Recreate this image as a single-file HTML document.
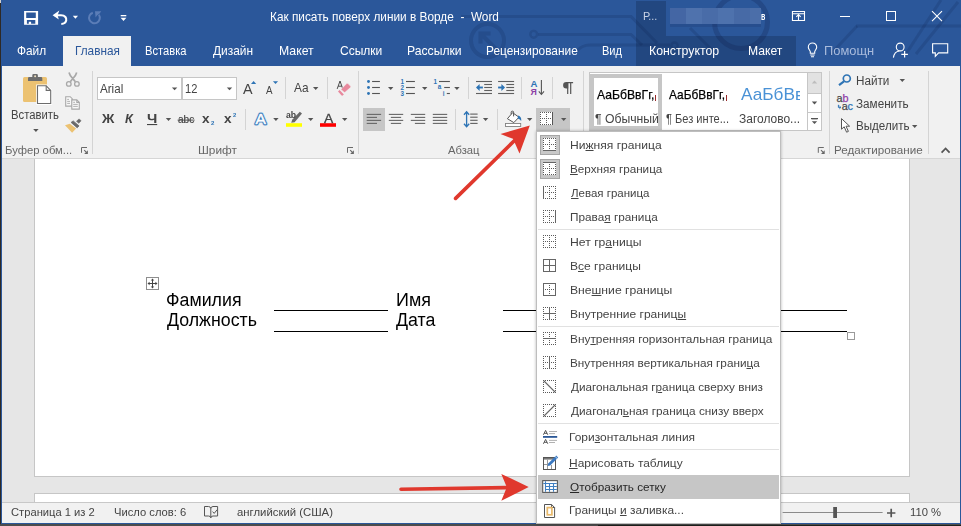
<!DOCTYPE html>
<html><head><meta charset="utf-8">
<style>
html,body{margin:0;padding:0}
body{width:961px;height:526px;overflow:hidden;background:#2e2925;position:relative;font-family:"Liberation Sans",sans-serif}
.a{position:absolute}
.t{position:absolute;line-height:20px;white-space:pre;transform-origin:0 0;display:block}
.t u{text-decoration:underline;text-underline-offset:1px;text-decoration-thickness:1px}
svg{position:absolute;overflow:visible}
.sep{position:absolute;width:1px;background:#d4d4d4}
.ar{position:absolute;width:0;height:0;border-left:2.6px solid transparent;border-right:2.6px solid transparent;border-top:2.8px solid #555}
</style></head><body>
<!-- window -->
<div class="a" style="left:0;top:524px;width:961px;height:2px;background:#4c4c4c"></div>
<div class="a" style="left:598px;top:525px;width:363px;height:1px;background:#1e211c"></div>
<div class="a" style="left:0;top:0;width:1px;height:3px;background:#d0d0d0"></div>
<div class="a" style="left:1px;top:0;width:960px;height:524.4px;background:#2b579a"></div>
<!-- contextual dark -->
<div class="a" style="left:636px;top:1px;width:30px;height:35px;background:#224780"></div>
<div class="a" style="left:636px;top:36px;width:160px;height:30px;background:#224780"></div>
<!-- bg pattern -->
<svg style="left:0;top:0" width="961" height="66" viewBox="0 0 961 66" fill="none" stroke="#264d8b" stroke-width="3">
<g stroke="rgba(8,22,58,0.15)" fill="none" stroke-width="3">
<path d="M461 16.5H631L657 43"/>
<circle cx="487.5" cy="40.6" r="16.5" stroke-width="4"/>
<path d="M497 50L481 34M480.5 43.5V33.5H490.5" stroke-width="4"/>
<circle cx="533.7" cy="34.3" r="3.4" stroke-width="2.4"/>
<path d="M538 34.4H631L642 45"/>
<path d="M577 51Q582 45 590 45H670"/>
<circle cx="674.5" cy="45.7" r="3.2" stroke-width="2.4"/>
<path d="M856 26H961"/>
<path d="M857 26L830 55"/>
<path d="M941 0L906 54"/>
<path d="M958 2L916 54"/>
<circle cx="741" cy="22" r="26.5" stroke-width="5" stroke="rgba(8,22,58,0.2)"/>
<path d="M690 28L712 50"/>
</g>

</svg>
<!-- blur -->
<div class="a" style="left:670px;top:8px;width:91px;height:16px;background:linear-gradient(90deg,#4466a4 0 16px,#4f72ad 16px 32px,#496ca8 32px 48px,#4e72ad 48px 64px,#476aa6 64px 80px,#4b6ea9 80px 91px);filter:blur(.5px)"></div>
<div class="a" style="left:670px;top:24px;width:91px;height:3px;background:rgba(20,40,90,.18);filter:blur(.6px)"></div>
<!-- active tab -->
<div class="a" style="left:63px;top:36px;width:68px;height:30px;background:#f1f1f1"></div>
<!-- ribbon -->
<div class="a" style="left:2px;top:66px;width:958px;height:92px;background:#f1f1f1"></div>
<div class="a" style="left:2px;top:158px;width:958px;height:1px;background:#d6d6d6"></div>
<!-- doc area -->
<div class="a" style="left:2px;top:159px;width:958px;height:343px;background:#e6e6e6"></div>
<div class="a" style="left:34px;top:159px;width:876px;height:318px;background:#fff;box-sizing:border-box;border:1px solid #c6c6c6;border-top:none"></div>
<div class="a" style="left:34px;top:493px;width:876px;height:9px;background:#fff;box-sizing:border-box;border:1px solid #c6c6c6;border-bottom:none"></div>
<!-- status -->
<div class="a" style="left:2px;top:502px;width:958px;height:1px;background:#c8c8c8"></div>
<div class="a" style="left:2px;top:503px;width:958px;height:20.2px;background:#f1f1f1"></div>
<svg style="left:0;top:0" width="961" height="526" viewBox="0 0 961 526">
<!-- save -->
<path fill="#fff" fill-rule="evenodd" d="M24.1 11.1H38.1V24.7H24.1ZM26.2 12.5H35.8V18H26.2ZM26.9 20H35.3V23.8H31.1V21.7H28.8V23.8H26.9Z"/>
<!-- undo -->
<path d="M54.5 15.2H61C65.2 15.2 66.8 18.2 66.2 20.6C65.7 22.8 63.6 23.9 61.3 24" stroke="#fff" stroke-width="2.1" fill="none"/>
<path d="M59.3 10.6L52.6 15.2L58.8 19.4L57.6 15.2Z" fill="#fff"/>
<path d="M72.8 15.7H78L75.4 18.7Z" fill="#fff"/>
<!-- redo -->
<path d="M98.9 14.8A5.4 5.4 0 1 1 92.8 12.7" stroke="#5b7db7" stroke-width="2" fill="none"/>
<path d="M95 11.3H101.3L99.6 13.6L97 15.4L95.6 17.4Z" fill="#5b7db7"/>
<!-- qat -->
<rect x="120.7" y="15" width="5.6" height="1.3" fill="#fff"/>
<path d="M120.6 17.8H126.4L123.5 20.9Z" fill="#fff"/>
<!-- window buttons -->
<path d="M792.45 11.45H804.5V20.5H792.45ZM792.45 13.8H804.5" stroke="#fff" stroke-width="1.1" fill="none"/>
<path d="M798.5 20.5V14.6M796.3 16.8L798.5 14.6L800.7 16.8" stroke="#fff" stroke-width="1.1" fill="none"/>
<rect x="840" y="16" width="10" height="1" fill="#fff"/>
<rect x="886.5" y="11.5" width="9" height="9" stroke="#fff" stroke-width="1" fill="none"/>
<path d="M932 11.2L942 21.2M942 11.2L932 21.2" stroke="#fff" stroke-width="1.1" fill="none"/>
<!-- lightbulb -->
<path d="M810.3 53.2V51.8C810.3 50.4 808.3 49.3 808.3 47.2A4.2 4.2 0 0 1 816.7 47.2C816.7 49.3 814.7 50.4 814.7 51.8V53.2Z" stroke="#fff" stroke-width="1.1" fill="none"/>
<path d="M810.3 55H814.7M811 56.8H814" stroke="#fff" stroke-width="1.1"/>
<!-- person+ -->
<circle cx="900.2" cy="47" r="3.9" stroke="#fff" stroke-width="1.1" fill="none"/>
<path d="M893.4 57.6C894 53.4 896.6 51.3 899.4 51" stroke="#fff" stroke-width="1.1" fill="none"/>
<path d="M904.6 51V57.6M901.3 54.3H907.9" stroke="#fff" stroke-width="1.2"/>
<!-- comment -->
<path d="M932.6 43.7H947.7V52.9H938.6L935.3 56.3V52.9H932.6Z" stroke="#fff" stroke-width="1.1" fill="none"/>
</svg>

<!-- group separators -->
<div class="sep" style="left:92px;top:71px;height:83px"></div>
<div class="sep" style="left:358px;top:71px;height:83px"></div>
<div class="sep" style="left:583px;top:71px;height:83px"></div>
<div class="sep" style="left:829px;top:71px;height:83px"></div>
<div class="sep" style="left:928px;top:71px;height:83px"></div>
<!-- small separators row1 -->
<div class="sep" style="left:285px;top:77px;height:22px"></div>
<div class="sep" style="left:327px;top:77px;height:22px"></div>
<div class="sep" style="left:468px;top:77px;height:22px"></div>
<div class="sep" style="left:521px;top:77px;height:22px"></div>
<div class="sep" style="left:552px;top:77px;height:22px"></div>
<!-- small separators row2 -->
<div class="sep" style="left:245px;top:109px;height:21px"></div>
<div class="sep" style="left:455px;top:109px;height:21px"></div>
<div class="sep" style="left:497px;top:109px;height:21px"></div>
<!-- font boxes -->
<div class="a" style="left:97px;top:77px;width:85px;height:23px;box-sizing:border-box;background:#fff;border:1px solid #c6c6c6"></div>
<div class="a" style="left:182px;top:77px;width:55px;height:23px;box-sizing:border-box;background:#fff;border:1px solid #c6c6c6"></div>
<!-- selected buttons -->
<div class="a" style="left:363px;top:108px;width:22px;height:23px;background:#c6c6c6"></div>
<div class="a" style="left:536px;top:108px;width:34px;height:24px;background:#c6c6c6"></div>
<!-- styles gallery -->
<div class="a" style="left:589px;top:72px;width:233px;height:59px;box-sizing:border-box;background:#fff;border:1px solid #c6c6c6"></div>
<div class="a" style="left:590px;top:74px;width:72px;height:56px;box-sizing:border-box;border:4px solid #c6c6c6"></div>
<div class="a" style="left:807px;top:72px;width:15px;height:59px;box-sizing:border-box;border:1px solid #c6c6c6;background:#fff"></div>
<div class="a" style="left:808px;top:73px;width:13px;height:20px;background:#e2e2e2"></div>
<div class="a" style="left:807px;top:93px;width:15px;height:1px;background:#c6c6c6"></div>
<div class="a" style="left:807px;top:112px;width:15px;height:1px;background:#c6c6c6"></div>
<div class="a" style="left:811.4px;top:118.4px;width:6.2px;height:1px;background:#555"></div>

<div class="a" style="left:655px;top:95px;width:1px;height:6px;background:#9a2a2a"></div>
<div class="a" style="left:726px;top:95px;width:1px;height:6px;background:#9a2a2a"></div>

<svg style="left:0;top:0" width="961" height="526" viewBox="0 0 961 526">
<!-- paste -->
<rect x="23" y="77" width="24" height="25" rx="1.6" fill="#ecc272"/>
<path d="M28 81V78.2Q28 77 29.2 77H32.3V75.2Q32.3 74 33.5 74H36.7Q37.9 74 37.9 75.2V77H41.1Q42.3 77 42.3 78.2V81Z" fill="#6d6d6d"/>
<circle cx="35.1" cy="76.3" r="1" fill="#f1e3c4"/>
<path d="M36.2 84.4H46.8L52.2 89.9V105H36.2Z" fill="#fff"/>
<path d="M37.5 85.8H46.2L50.7 90.4V103.5H37.5Z" fill="#fff" stroke="#6d6d6d" stroke-width="1.1"/>
<path d="M46.2 85.8V90.4H50.7" fill="none" stroke="#6d6d6d" stroke-width="1.1"/>
<!-- scissors -->
<g stroke="#a8a8a8" fill="none" stroke-width="1.3">
<circle cx="68.8" cy="83.9" r="2.3"/><circle cx="76.9" cy="83.9" r="2.3"/>
<path d="M69 72.4Q70 76 72.8 78.6L75.4 81.8M76.7 72.4Q75.7 76 72.8 78.6L70.3 81.8" stroke-width="1.7"/>
</g>
<!-- copy -->
<g stroke="#a8a8a8" fill="#f8f8f8" stroke-width="1.1">
<path d="M65.7 96.7H70.2L72.2 98.7V106.1H65.7Z"/>
<path d="M71.8 99.9H76.8L79.3 102.4V109.1H71.8Z"/>
<path d="M76.8 99.9V102.4H79.3" fill="none"/>
<path d="M67.2 99.4H69M67.2 101.4H70M67.2 103.4H70M73.2 102.3H75M73.2 104.4H77.8M73.2 106.4H77.8" fill="none" stroke-width="0.9"/>
</g>
<!-- format painter -->
<path d="M65 125.3L69.8 123.8L76.1 128.6L72.1 132.8Z" fill="#ecc272"/>
<path d="M71.1 122.4L73.2 120.9L79 125.9L77.2 127.8Z" fill="#6a6a6a" stroke="#6a6a6a" stroke-width="0.8" stroke-linejoin="round"/>
<path d="M76.5 121.3L79 118.9L81.1 120.7L78.8 123.2Z" fill="#6a6a6a" stroke="#6a6a6a" stroke-width="0.6" stroke-linejoin="round"/>
<!-- dialog launchers -->
<g>
<path d="M81.5 152.8V147.5H87" stroke="#6a6a6a" fill="none" stroke-width="1"/>
<path d="M87.9 150.2V153.9H84.2Z" fill="#666"/>
<path d="M84.2 150.2L86.4 152.4" stroke="#666" stroke-width="1.1"/>
</g>
<g transform="translate(266 0)">
<path d="M81.5 152.8V147.5H87" stroke="#6a6a6a" fill="none" stroke-width="1"/>
<path d="M87.9 150.2V153.9H84.2Z" fill="#666"/>
<path d="M84.2 150.2L86.4 152.4" stroke="#666" stroke-width="1.1"/>
</g>
<g transform="translate(736.8 0)">
<path d="M81.5 152.8V147.5H87" stroke="#6a6a6a" fill="none" stroke-width="1"/>
<path d="M87.9 150.2V153.9H84.2Z" fill="#666"/>
<path d="M84.2 150.2L86.4 152.4" stroke="#666" stroke-width="1.1"/>
</g>
<!-- collapse chevron -->
<path d="M941.6 152.6L945.6 148.4L949.6 152.6" stroke="#555" stroke-width="1.7" fill="none"/>
</svg>

<svg style="left:0;top:0" width="961" height="526" viewBox="0 0 961 526">
<path d="M171.9 87.4h5.4l-2.7 2.9z" fill="#555"/>
<path d="M226.8 87.4h5.4l-2.7 2.9z" fill="#555"/>
<path d="M165.8 118.1h5.4l-2.7 2.9z" fill="#555"/>
<path d="M313 87h5.4l-2.7 2.9z" fill="#555"/>
<path d="M273.2 118.1h5.4l-2.7 2.9z" fill="#555"/>
<path d="M308 118.1h5.4l-2.7 2.9z" fill="#555"/>
<path d="M342 118.1h5.4l-2.7 2.9z" fill="#555"/>
<path d="M388 87h5.4l-2.7 2.9z" fill="#555"/>
<path d="M422 87h5.4l-2.7 2.9z" fill="#555"/>
<path d="M454.2 87h5.4l-2.7 2.9z" fill="#555"/>
<path d="M482.9 118.1h5.4l-2.7 2.9z" fill="#555"/>
<path d="M527 118.1h5.4l-2.7 2.9z" fill="#555"/>
<path d="M561 118.1h5.4l-2.7 2.9z" fill="#555"/>
<path d="M33.2 129h5.4l-2.7 2.9z" fill="#555"/>
<path d="M899.6 79h5.4l-2.7 2.9z" fill="#555"/>
<path d="M912 125h5.4l-2.7 2.9z" fill="#555"/>
<path d="M811.8 101.5h5.4l-2.7 2.9z" fill="#555"/>
<path d="M811.8 121.2h5.4l-2.7 2.9z" fill="#555"/>
<path d="M811.8 83.4h5.4l-2.7 -2.9z" fill="#bdbdbd"/>
<rect x="811.4" y="118.3" width="6.2" height="1.1" fill="#555"/>
<path d="M251 84h5.2l-2.6 -2.9z" fill="#2e74b5"/>
<path d="M272.9 81.2h5.2l-2.6 2.9z" fill="#2e74b5"/>
<rect x="147" y="124" width="10.2" height="1.1" fill="#444"/>
<rect x="177.6" y="119.6" width="17" height="1" fill="#555"/>
<path d="M337.2 88.9L340 81L342.8 88.9M338.2 86.2H341.8" stroke="#4a4a4a" stroke-width="1" fill="none"/>
<path d="M340.9 89.4L346.6 83.6Q347.3 82.9 348 83.6L350.5 86.1Q351.2 86.8 350.5 87.5L345.3 92.1Q344.6 92.7 343.9 92.1Z" fill="#e8899d" stroke="#f1f1f1" stroke-width="0.6"/>
<path d="M339.6 90L343.9 94.4L342.6 95.4Q342 95.9 341.4 95.3L338 91.6Z" fill="#e8899d"/>
<text x="255.6" y="124.1" font-family="Liberation Sans" font-size="15.5" fill="none" stroke="#b9d3ee" stroke-width="3.6" stroke-linejoin="round">A</text>
<text x="255.6" y="124.1" font-family="Liberation Sans" font-size="15.5" fill="none" stroke="#2e74b5" stroke-width="2.4" stroke-linejoin="round">A</text>
<text x="255.6" y="124.1" font-family="Liberation Sans" font-size="15.5" fill="#fff" stroke="#fff" stroke-width="0.5">A</text>
<rect x="286" y="123.2" width="16" height="3.6" fill="#ffff00"/>
<path d="M299.8 111.8L302 113.6L294.6 122.2L291.2 122.8L292.2 119.8Z" fill="#686868"/>
<rect x="320" y="123.2" width="16" height="3.6" fill="#ff0000"/>
<circle cx="368.5" cy="81.5" r="1.45" fill="#2e74b5"/>
<rect x="372.1" y="80.95" width="7.8" height="1.1" fill="#555"/>
<circle cx="368.5" cy="87.5" r="1.45" fill="#2e74b5"/>
<rect x="372.1" y="86.95" width="7.8" height="1.1" fill="#555"/>
<circle cx="368.5" cy="93.5" r="1.45" fill="#2e74b5"/>
<rect x="372.1" y="92.95" width="7.8" height="1.1" fill="#555"/>
<text x="400.6" y="83.9" font-family="Liberation Sans" font-weight="bold" font-size="6.3" fill="#2e74b5">1</text>
<rect x="406" y="80.95" width="8.9" height="1.1" fill="#555"/>
<text x="400.6" y="89.9" font-family="Liberation Sans" font-weight="bold" font-size="6.3" fill="#2e74b5">2</text>
<rect x="406" y="86.95" width="8.9" height="1.1" fill="#555"/>
<text x="400.6" y="95.9" font-family="Liberation Sans" font-weight="bold" font-size="6.3" fill="#2e74b5">3</text>
<rect x="406" y="92.95" width="8.9" height="1.1" fill="#555"/>
<text x="433.4" y="83.9" font-family="Liberation Sans" font-weight="bold" font-size="6.3" fill="#2e74b5">1</text>
<rect x="439" y="80.95" width="10.9" height="1.1" fill="#555"/>
<text x="437.8" y="89.4" font-family="Liberation Sans" font-weight="bold" font-size="6.3" fill="#2e74b5">a</text>
<rect x="444.2" y="86.95" width="5.7" height="1.1" fill="#555"/>
<text x="442.8" y="95.9" font-family="Liberation Sans" font-weight="bold" font-size="6.3" fill="#2e74b5">i</text>
<rect x="446.8" y="92.95" width="3.1" height="1.1" fill="#555"/>
<rect x="476" y="80.95" width="16" height="1.1" fill="#606060"/>
<rect x="484.2" y="83.95" width="7.8" height="1.1" fill="#606060"/>
<rect x="484.2" y="86.95" width="7.8" height="1.1" fill="#606060"/>
<rect x="484.2" y="89.95" width="7.8" height="1.1" fill="#606060"/>
<rect x="476" y="92.95" width="16" height="1.1" fill="#606060"/>
<path d="M482.9 87.5H477.2" stroke="#2e74b5" stroke-width="1.9" fill="none"/>
<path d="M476 87.5L479.6 84V91Z" fill="#2e74b5"/>
<rect x="498.1" y="80.95" width="16" height="1.1" fill="#606060"/>
<rect x="506.3" y="83.95" width="7.8" height="1.1" fill="#606060"/>
<rect x="506.3" y="86.95" width="7.8" height="1.1" fill="#606060"/>
<rect x="506.3" y="89.95" width="7.8" height="1.1" fill="#606060"/>
<rect x="498.1" y="92.95" width="16" height="1.1" fill="#606060"/>
<path d="M498.1 87.5H503.70000000000005" stroke="#2e74b5" stroke-width="1.9" fill="none"/>
<path d="M505.0 87.5L501.40000000000003 84V91Z" fill="#2e74b5"/>
<text x="530.6" y="86.8" font-family="Liberation Sans" font-weight="bold" font-size="9.6" fill="#2e74b5">A</text>
<text x="530.6" y="94.7" font-family="Liberation Sans" font-weight="bold" font-size="8.8" fill="#8b3fa5">Я</text>
<path d="M541.4 80V94.2M538.8 91.4L541.4 94.5L544 91.4" stroke="#555" stroke-width="1.1" fill="none"/>
<path d="M567.7 94V82.6M570.7 94V82.6M573.1 82.6H566.4" stroke="#555" stroke-width="1.2" fill="none"/>
<path d="M568.2 82H566.4A3.3 3.3 0 0 0 566.4 88.6H568.2Z" fill="#555"/>
<rect x="366.7" y="113.85000000000001" width="14.4" height="1.1" fill="#666"/>
<rect x="366.7" y="116.85000000000001" width="10.3" height="1.1" fill="#666"/>
<rect x="366.7" y="119.85000000000001" width="14.4" height="1.1" fill="#666"/>
<rect x="366.7" y="122.85000000000001" width="10.3" height="1.1" fill="#666"/>
<rect x="388.8" y="113.85000000000001" width="14.4" height="1.1" fill="#666"/>
<rect x="390.85" y="116.85000000000001" width="10.3" height="1.1" fill="#666"/>
<rect x="388.8" y="119.85000000000001" width="14.4" height="1.1" fill="#666"/>
<rect x="390.85" y="122.85000000000001" width="10.3" height="1.1" fill="#666"/>
<rect x="410.8" y="113.85000000000001" width="14.4" height="1.1" fill="#666"/>
<rect x="414.90000000000003" y="116.85000000000001" width="10.3" height="1.1" fill="#666"/>
<rect x="410.8" y="119.85000000000001" width="14.4" height="1.1" fill="#666"/>
<rect x="414.90000000000003" y="122.85000000000001" width="10.3" height="1.1" fill="#666"/>
<rect x="432.8" y="113.85000000000001" width="14.4" height="1.1" fill="#666"/>
<rect x="432.8" y="116.85000000000001" width="14.4" height="1.1" fill="#666"/>
<rect x="432.8" y="119.85000000000001" width="14.4" height="1.1" fill="#666"/>
<rect x="432.8" y="122.85000000000001" width="14.4" height="1.1" fill="#666"/>
<path d="M466.6 112V126.4M464 114.7L466.6 111.7L469.2 114.7M464 123.7L466.6 126.7L469.2 123.7" stroke="#2e74b5" stroke-width="1.3" fill="none"/>
<rect x="470.2" y="113.55" width="7.4" height="1.1" fill="#606060"/>
<rect x="470.2" y="116.65" width="7.4" height="1.1" fill="#606060"/>
<rect x="470.2" y="119.75" width="7.4" height="1.1" fill="#606060"/>
<rect x="470.2" y="122.85000000000001" width="7.4" height="1.1" fill="#606060"/>
<rect x="505.5" y="123.5" width="15.2" height="3" fill="#fff" stroke="#808080" stroke-width="0.9"/>
<path d="M507.4 118.7L512.6 112.7L519 117.2L513.8 122.6Z" fill="#fff" stroke="#555" stroke-width="1" stroke-linejoin="round"/>
<path d="M511.2 114.2V112.2Q511.2 111.2 512.2 111.2H512.6Q513.6 111.2 513.6 112.2V116.4" fill="none" stroke="#555" stroke-width="1"/>
<path d="M518.2 115.4Q521.8 116.4 521.2 121Q519.6 118.6 517.6 118.4Z" fill="#2e74b5"/>
</svg>
<svg style="left:540px;top:112px" width="13" height="13" viewBox="0 0 13 13" shape-rendering="crispEdges"><rect width="13" height="13" fill="#fff"/><path d="M0 0h1v1h-1zM0 2h1v1h-1zM0 4h1v1h-1zM0 6h1v1h-1zM0 8h1v1h-1zM0 10h1v1h-1zM0 12h1v1h-1zM2 0h1v1h-1zM2 6h1v1h-1zM2 12h1v1h-1zM4 0h1v1h-1zM4 6h1v1h-1zM4 12h1v1h-1zM6 0h1v1h-1zM6 2h1v1h-1zM6 4h1v1h-1zM6 6h1v1h-1zM6 8h1v1h-1zM6 10h1v1h-1zM6 12h1v1h-1zM8 0h1v1h-1zM8 6h1v1h-1zM8 12h1v1h-1zM10 0h1v1h-1zM10 6h1v1h-1zM10 12h1v1h-1z" fill="#5a5a5a"/><rect x="12" y="0" width="1" height="13" fill="#555"/></svg>
<!-- table lines -->
<div class="a" style="left:274px;top:310px;width:114px;height:1px;background:#000"></div>
<div class="a" style="left:274px;top:331px;width:114px;height:1px;background:#000"></div>
<div class="a" style="left:503px;top:310px;width:344px;height:1px;background:#000"></div>
<div class="a" style="left:503px;top:331px;width:344px;height:1px;background:#000"></div>
<!-- move handle -->
<div class="a" style="left:146px;top:277px;width:13px;height:13px;box-sizing:border-box;border:1px solid #8e8e8e;background:#fff"></div>
<svg style="left:146px;top:277px" width="13" height="13" viewBox="0 0 13 13"><path d="M6.5 2.2V10.8M2.2 6.5H10.8" stroke="#444" stroke-width="1" fill="none"/><path d="M6.5 1.5L4.8 3.6H8.2ZM6.5 11.5L4.8 9.4H8.2ZM1.5 6.5L3.6 4.8V8.2ZM11.5 6.5L9.4 4.8V8.2Z" fill="#444"/></svg>
<!-- resize handle -->
<div class="a" style="left:847px;top:332px;width:8px;height:8px;box-sizing:border-box;border:1px solid #9a9a9a;background:#fff"></div>

<div class="a" style="left:536px;top:131px;width:245px;height:393px;background:#fff;box-sizing:border-box;border:1px solid #bebebe;box-shadow:0 0 3px rgba(0,0,0,.28)"></div>
<div class="a" style="left:540px;top:135px;width:20px;height:20px;box-sizing:border-box;background:#c8c8c8;border:1px solid #a6a6a6"></div>
<div class="a" style="left:540px;top:159px;width:20px;height:20px;box-sizing:border-box;background:#c8c8c8;border:1px solid #a6a6a6"></div>
<div class="a" style="left:538px;top:475px;width:241px;height:24px;background:#c6c6c6"></div>
<div class="a" style="left:538px;top:229px;width:241px;height:1px;background:#e1e1e1"></div>
<div class="a" style="left:538px;top:326px;width:241px;height:1px;background:#e1e1e1"></div>
<div class="a" style="left:538px;top:423px;width:241px;height:1px;background:#e1e1e1"></div>
<div class="a" style="left:570px;top:449px;width:209px;height:1px;background:#e1e1e1"></div>
<svg style="left:543px;top:138px" width="13" height="13" viewBox="0 0 13 13" shape-rendering="crispEdges"><rect width="13" height="13" fill="#fff"/><path d="M0 0h1v1h-1zM0 2h1v1h-1zM0 4h1v1h-1zM0 6h1v1h-1zM0 8h1v1h-1zM0 10h1v1h-1zM2 0h1v1h-1zM2 6h1v1h-1zM4 0h1v1h-1zM4 6h1v1h-1zM6 0h1v1h-1zM6 2h1v1h-1zM6 4h1v1h-1zM6 6h1v1h-1zM6 8h1v1h-1zM6 10h1v1h-1zM8 0h1v1h-1zM8 6h1v1h-1zM10 0h1v1h-1zM10 6h1v1h-1zM12 0h1v1h-1zM12 2h1v1h-1zM12 4h1v1h-1zM12 6h1v1h-1zM12 8h1v1h-1zM12 10h1v1h-1z" fill="#5a5a5a"/><rect x="0" y="12" width="13" height="1" fill="#666"/></svg>
<svg style="left:543px;top:162px" width="13" height="13" viewBox="0 0 13 13" shape-rendering="crispEdges"><rect width="13" height="13" fill="#fff"/><path d="M0 2h1v1h-1zM0 4h1v1h-1zM0 6h1v1h-1zM0 8h1v1h-1zM0 10h1v1h-1zM0 12h1v1h-1zM2 6h1v1h-1zM2 12h1v1h-1zM4 6h1v1h-1zM4 12h1v1h-1zM6 2h1v1h-1zM6 4h1v1h-1zM6 6h1v1h-1zM6 8h1v1h-1zM6 10h1v1h-1zM6 12h1v1h-1zM8 6h1v1h-1zM8 12h1v1h-1zM10 6h1v1h-1zM10 12h1v1h-1zM12 2h1v1h-1zM12 4h1v1h-1zM12 6h1v1h-1zM12 8h1v1h-1zM12 10h1v1h-1zM12 12h1v1h-1z" fill="#5a5a5a"/><rect x="0" y="0" width="13" height="1" fill="#666"/></svg>
<svg style="left:543px;top:186px" width="13" height="13" viewBox="0 0 13 13" shape-rendering="crispEdges"><path d="M2 0h1v1h-1zM2 6h1v1h-1zM2 12h1v1h-1zM4 0h1v1h-1zM4 6h1v1h-1zM4 12h1v1h-1zM6 0h1v1h-1zM6 2h1v1h-1zM6 4h1v1h-1zM6 6h1v1h-1zM6 8h1v1h-1zM6 10h1v1h-1zM6 12h1v1h-1zM8 0h1v1h-1zM8 6h1v1h-1zM8 12h1v1h-1zM10 0h1v1h-1zM10 6h1v1h-1zM10 12h1v1h-1zM12 0h1v1h-1zM12 2h1v1h-1zM12 4h1v1h-1zM12 6h1v1h-1zM12 8h1v1h-1zM12 10h1v1h-1zM12 12h1v1h-1z" fill="#5a5a5a"/><rect x="0" y="0" width="1" height="13" fill="#666"/></svg>
<svg style="left:543px;top:210px" width="13" height="13" viewBox="0 0 13 13" shape-rendering="crispEdges"><path d="M0 0h1v1h-1zM0 2h1v1h-1zM0 4h1v1h-1zM0 6h1v1h-1zM0 8h1v1h-1zM0 10h1v1h-1zM0 12h1v1h-1zM2 0h1v1h-1zM2 6h1v1h-1zM2 12h1v1h-1zM4 0h1v1h-1zM4 6h1v1h-1zM4 12h1v1h-1zM6 0h1v1h-1zM6 2h1v1h-1zM6 4h1v1h-1zM6 6h1v1h-1zM6 8h1v1h-1zM6 10h1v1h-1zM6 12h1v1h-1zM8 0h1v1h-1zM8 6h1v1h-1zM8 12h1v1h-1zM10 0h1v1h-1zM10 6h1v1h-1zM10 12h1v1h-1z" fill="#5a5a5a"/><rect x="12" y="0" width="1" height="13" fill="#666"/></svg>
<svg style="left:543px;top:235px" width="13" height="13" viewBox="0 0 13 13" shape-rendering="crispEdges"><path d="M0 0h1v1h-1zM0 2h1v1h-1zM0 4h1v1h-1zM0 6h1v1h-1zM0 8h1v1h-1zM0 10h1v1h-1zM0 12h1v1h-1zM2 0h1v1h-1zM2 6h1v1h-1zM2 12h1v1h-1zM4 0h1v1h-1zM4 6h1v1h-1zM4 12h1v1h-1zM6 0h1v1h-1zM6 2h1v1h-1zM6 4h1v1h-1zM6 6h1v1h-1zM6 8h1v1h-1zM6 10h1v1h-1zM6 12h1v1h-1zM8 0h1v1h-1zM8 6h1v1h-1zM8 12h1v1h-1zM10 0h1v1h-1zM10 6h1v1h-1zM10 12h1v1h-1zM12 0h1v1h-1zM12 2h1v1h-1zM12 4h1v1h-1zM12 6h1v1h-1zM12 8h1v1h-1zM12 10h1v1h-1zM12 12h1v1h-1z" fill="#5a5a5a"/></svg>
<svg style="left:543px;top:259px" width="13" height="13" viewBox="0 0 13 13" shape-rendering="crispEdges"><path d="" fill="#5a5a5a"/><rect x="0" y="0" width="13" height="1" fill="#666"/><rect x="0" y="12" width="13" height="1" fill="#666"/><rect x="0" y="0" width="1" height="13" fill="#666"/><rect x="12" y="0" width="1" height="13" fill="#666"/><rect x="0" y="6" width="13" height="1" fill="#666"/><rect x="6" y="0" width="1" height="13" fill="#666"/></svg>
<svg style="left:543px;top:283px" width="13" height="13" viewBox="0 0 13 13" shape-rendering="crispEdges"><path d="M2 6h1v1h-1zM4 6h1v1h-1zM6 2h1v1h-1zM6 4h1v1h-1zM6 6h1v1h-1zM6 8h1v1h-1zM6 10h1v1h-1zM8 6h1v1h-1zM10 6h1v1h-1z" fill="#5a5a5a"/><rect x="0" y="0" width="13" height="1" fill="#666"/><rect x="0" y="12" width="13" height="1" fill="#666"/><rect x="0" y="0" width="1" height="13" fill="#666"/><rect x="12" y="0" width="1" height="13" fill="#666"/></svg>
<svg style="left:543px;top:307px" width="13" height="13" viewBox="0 0 13 13" shape-rendering="crispEdges"><path d="M0 0h1v1h-1zM0 2h1v1h-1zM0 4h1v1h-1zM0 8h1v1h-1zM0 10h1v1h-1zM0 12h1v1h-1zM2 0h1v1h-1zM2 12h1v1h-1zM4 0h1v1h-1zM4 12h1v1h-1zM8 0h1v1h-1zM8 12h1v1h-1zM10 0h1v1h-1zM10 12h1v1h-1zM12 0h1v1h-1zM12 2h1v1h-1zM12 4h1v1h-1zM12 8h1v1h-1zM12 10h1v1h-1zM12 12h1v1h-1z" fill="#5a5a5a"/><rect x="0" y="6" width="13" height="1" fill="#666"/><rect x="6" y="0" width="1" height="13" fill="#666"/></svg>
<svg style="left:543px;top:332px" width="13" height="13" viewBox="0 0 13 13" shape-rendering="crispEdges"><path d="M0 0h1v1h-1zM0 2h1v1h-1zM0 4h1v1h-1zM0 8h1v1h-1zM0 10h1v1h-1zM0 12h1v1h-1zM2 0h1v1h-1zM2 12h1v1h-1zM4 0h1v1h-1zM4 12h1v1h-1zM6 0h1v1h-1zM6 2h1v1h-1zM6 4h1v1h-1zM6 8h1v1h-1zM6 10h1v1h-1zM6 12h1v1h-1zM8 0h1v1h-1zM8 12h1v1h-1zM10 0h1v1h-1zM10 12h1v1h-1zM12 0h1v1h-1zM12 2h1v1h-1zM12 4h1v1h-1zM12 8h1v1h-1zM12 10h1v1h-1zM12 12h1v1h-1z" fill="#5a5a5a"/><rect x="0" y="6" width="13" height="1" fill="#666"/></svg>
<svg style="left:543px;top:356px" width="13" height="13" viewBox="0 0 13 13" shape-rendering="crispEdges"><path d="M0 0h1v1h-1zM0 2h1v1h-1zM0 4h1v1h-1zM0 6h1v1h-1zM0 8h1v1h-1zM0 10h1v1h-1zM0 12h1v1h-1zM2 0h1v1h-1zM2 6h1v1h-1zM2 12h1v1h-1zM4 0h1v1h-1zM4 6h1v1h-1zM4 12h1v1h-1zM8 0h1v1h-1zM8 6h1v1h-1zM8 12h1v1h-1zM10 0h1v1h-1zM10 6h1v1h-1zM10 12h1v1h-1zM12 0h1v1h-1zM12 2h1v1h-1zM12 4h1v1h-1zM12 6h1v1h-1zM12 8h1v1h-1zM12 10h1v1h-1zM12 12h1v1h-1z" fill="#5a5a5a"/><rect x="6" y="0" width="1" height="13" fill="#666"/></svg>
<svg style="left:543px;top:380px" width="13" height="13" viewBox="0 0 13 13" shape-rendering="crispEdges"><path d="M0 0h1v1h-1zM0 2h1v1h-1zM0 4h1v1h-1zM0 6h1v1h-1zM0 8h1v1h-1zM0 10h1v1h-1zM0 12h1v1h-1zM2 0h1v1h-1zM2 12h1v1h-1zM4 0h1v1h-1zM4 12h1v1h-1zM6 0h1v1h-1zM6 12h1v1h-1zM8 0h1v1h-1zM8 12h1v1h-1zM10 0h1v1h-1zM10 12h1v1h-1zM12 0h1v1h-1zM12 2h1v1h-1zM12 4h1v1h-1zM12 6h1v1h-1zM12 8h1v1h-1zM12 10h1v1h-1zM12 12h1v1h-1z" fill="#5a5a5a"/><path d="M0.5 0.5L12.5 12.5" stroke="#666" stroke-width="1.1" shape-rendering="auto"/></svg>
<svg style="left:543px;top:404px" width="13" height="13" viewBox="0 0 13 13" shape-rendering="crispEdges"><path d="M0 0h1v1h-1zM0 2h1v1h-1zM0 4h1v1h-1zM0 6h1v1h-1zM0 8h1v1h-1zM0 10h1v1h-1zM0 12h1v1h-1zM2 0h1v1h-1zM2 12h1v1h-1zM4 0h1v1h-1zM4 12h1v1h-1zM6 0h1v1h-1zM6 12h1v1h-1zM8 0h1v1h-1zM8 12h1v1h-1zM10 0h1v1h-1zM10 12h1v1h-1zM12 0h1v1h-1zM12 2h1v1h-1zM12 4h1v1h-1zM12 6h1v1h-1zM12 8h1v1h-1zM12 10h1v1h-1zM12 12h1v1h-1z" fill="#5a5a5a"/><path d="M0.5 12.5L12.5 0.5" stroke="#666" stroke-width="1.1" shape-rendering="auto"/></svg>
<svg style="left:543px;top:430px" width="15" height="15" viewBox="0 0 15 15">
<path d="M0.4 4.8L2.6 0.4L4.8 4.8M1.2 3.3H4" stroke="#444" stroke-width="0.9" fill="none"/>
<path d="M0.4 13.8L2.6 9.4L4.8 13.8M1.2 12.3H4" stroke="#444" stroke-width="0.9" fill="none"/>
<path d="M6 1.5H14M6 3.6H12M6 10.4H14M6 12.5H12" stroke="#a8a8a8" stroke-width="0.9"/>
<rect x="0" y="6" width="14.2" height="1.8" fill="#2b5797"/>
</svg>
<svg style="left:543px;top:455px" width="16" height="15" viewBox="0 0 16 15">
<rect x="0.5" y="2.5" width="12" height="12" fill="#fff" stroke="#555"/>
<rect x="1" y="3" width="11" height="1.6" fill="#777"/>
<path d="M4.5 4.5V14M8.5 10V14M1 9.5H4.5" stroke="#999" stroke-width="1"/>
<path d="M13.2 0.4L15.2 2.4L7.2 10.4L4.6 11L5.2 8.4Z" fill="#3a78c0"/>
<path d="M12.2 1.6L14 3.4" stroke="#fff" stroke-width="0.7"/>
</svg>
<svg style="left:0px;top:0px" width="961" height="526" viewBox="0 0 961 526">
<rect x="542.7" y="480.6" width="14.7" height="11.8" fill="#fff" stroke="#5a5a5a" stroke-width="1.1"/>
<path d="M545.5 481.2V491.8M549.5 483.5V491.8M553.5 483.5V491.8M543.3 483.5H556.8M545.5 486.5H556.8M545.5 489.5H556.8" stroke="#3f7fc1" stroke-width="1.1"/>
</svg>
<svg style="left:544px;top:504px" width="12" height="14" viewBox="0 0 12 14">
<path d="M0.5 0.5H7.6L10.6 3.5V13.5H0.5Z" fill="#fff" stroke="#555"/>
<path d="M7.6 0.5V3.5H10.6" fill="none" stroke="#555"/>
<rect x="3.3" y="3.6" width="4.6" height="7.2" fill="none" stroke="#e8b96a" stroke-width="1.7"/>
</svg>
<svg style="left:0;top:0" width="961" height="526" viewBox="0 0 961 526">
<!-- editing icons -->
<circle cx="846.8" cy="78.5" r="3.5" stroke="#2e74b5" stroke-width="1.7" fill="none"/>
<path d="M844 81.4L839 85.1" stroke="#2e74b5" stroke-width="2.2"/>
<text font-family="Liberation Sans" font-size="10.8" y="102.4" stroke-width="0.25"><tspan x="836.6" fill="#4a4a4a" stroke="#4a4a4a">a</tspan><tspan x="842.4" fill="#8e3aa8" stroke="#8e3aa8">b</tspan></text>
<text font-family="Liberation Sans" font-size="10.8" y="109.5" stroke-width="0.25"><tspan x="841.8" fill="#4a4a4a" stroke="#4a4a4a">a</tspan><tspan x="847.6" fill="#2e74b5" stroke="#2e74b5">c</tspan></text>
<path d="M838.4 104.8V107.4H840.6M839.4 106L840.9 107.4L839.4 108.8" stroke="#2e74b5" stroke-width="1" fill="none"/>
<path d="M841.5 118.6V129.2L844.2 126.8L846.6 132.2L848.4 131.4L846 126.2L849.6 126.2Z" fill="#fff" stroke="#555" stroke-width="1" stroke-linejoin="round"/>
<!-- status: book icon -->
<path d="M204.5 506.5H208.5Q210.6 506.5 210.8 508.6V517.8Q210.4 516 208.5 516H204.5ZM210.8 508.6Q211 506.5 213 506.5H217.6V516H213Q211.2 516 210.8 517.8" stroke="#555" stroke-width="1" fill="none"/>
<path d="M212.6 511.6L214.2 513.4L217.2 509.6" stroke="#555" stroke-width="1" fill="none"/>
<!-- zoom slider -->
<rect x="782.6" y="512" width="100" height="1" fill="#8a8a8a"/>
<rect x="833.2" y="507" width="3.8" height="11" fill="#555"/>
<path d="M887 513H895.4M891.2 508.8V517.2" stroke="#555" stroke-width="1.7"/>
</svg>

<span class="t" style="left:270.25px;top:6.90px;font-size:12.5px;color:#fff;transform:scaleX(0.9465);">Как писать поверх линии в Ворде  -  Word</span>
<span class="t" style="left:643.06px;top:6.20px;font-size:11.5px;color:#c8d2e5;transform:scaleX(0.9429);">Р...</span>
<span class="t" style="left:761.10px;top:6.30px;font-size:11.5px;color:#fff;transform:scaleX(0.6143);font-weight:bold">в</span>
<span class="t" style="left:17.00px;top:41.30px;font-size:12.8px;color:#fff;transform:scaleX(0.9274);">Файл</span>
<span class="t" style="left:74.58px;top:41.30px;font-size:12.8px;color:#2b579a;transform:scaleX(0.9202);">Главная</span>
<span class="t" style="left:144.88px;top:41.30px;font-size:12.8px;color:#fff;transform:scaleX(0.8723);">Вставка</span>
<span class="t" style="left:213.00px;top:41.30px;font-size:12.8px;color:#fff;transform:scaleX(0.9302);">Дизайн</span>
<span class="t" style="left:278.54px;top:41.30px;font-size:12.8px;color:#fff;transform:scaleX(0.9571);">Макет</span>
<span class="t" style="left:339.50px;top:41.30px;font-size:12.8px;color:#fff;transform:scaleX(0.9389);">Ссылки</span>
<span class="t" style="left:406.55px;top:41.30px;font-size:12.8px;color:#fff;transform:scaleX(0.9509);">Рассылки</span>
<span class="t" style="left:485.57px;top:41.30px;font-size:12.8px;color:#fff;transform:scaleX(0.9286);">Рецензирование</span>
<span class="t" style="left:602.14px;top:41.30px;font-size:12.8px;color:#fff;transform:scaleX(0.8636);">Вид</span>
<span class="t" style="left:648.54px;top:41.30px;font-size:12.8px;color:#fff;transform:scaleX(0.9618);">Конструктор</span>
<span class="t" style="left:747.80px;top:41.30px;font-size:12.8px;color:#fff;transform:scaleX(0.9500);">Макет</span>
<span class="t" style="left:823.79px;top:41.30px;font-size:12.8px;color:#a9bbdc;transform:scaleX(1.0083);">Помощн</span>
<span class="t" style="left:10.66px;top:104.80px;font-size:12px;color:#444;transform:scaleX(0.9400);">Вставить</span>
<span class="t" style="left:4.56px;top:140.00px;font-size:10.8px;color:#666;transform:scaleX(1.0444);">Буфер обм...</span>
<span class="t" style="left:197.61px;top:140.00px;font-size:10.8px;color:#666;transform:scaleX(1.0943);">Шрифт</span>
<span class="t" style="left:447.50px;top:140.00px;font-size:10.8px;color:#666;transform:scaleX(1.0417);">Абзац</span>
<span class="t" style="left:834.42px;top:140.00px;font-size:10.8px;color:#666;transform:scaleX(1.0772);">Редактирование</span>
<span class="t" style="left:100.40px;top:78.80px;font-size:12px;color:#444;transform:scaleX(0.9667);">Arial</span>
<span class="t" style="left:185.27px;top:78.80px;font-size:12px;color:#444;transform:scaleX(0.9250);">12</span>
<span class="t" style="left:101.60px;top:108.80px;font-size:12px;color:#444;transform:scaleX(1.1364);font-weight:bold">Ж</span>
<span class="t" style="left:124.90px;top:108.80px;font-size:12px;color:#444;transform:scaleX(1.0625);font-weight:bold;font-style:italic">К</span>
<span class="t" style="left:147.20px;top:108.80px;font-size:12px;color:#444;transform:scaleX(1.2250);font-weight:bold">Ч</span>
<span class="t" style="left:178.00px;top:108.60px;font-size:11.2px;color:#444;transform:scaleX(0.9000);-webkit-text-stroke:0.2px #444">abc</span>
<span class="t" style="left:202.30px;top:108.80px;font-size:13px;color:#444;transform:scaleX(1.0429);font-weight:bold">x</span>
<span class="t" style="left:210.60px;top:112.80px;font-size:5.4px;color:#2e74b5;transform:scaleX(1.1333);font-weight:bold">2</span>
<span class="t" style="left:224.10px;top:108.80px;font-size:13px;color:#444;transform:scaleX(1.0429);font-weight:bold">x</span>
<span class="t" style="left:233.20px;top:105.30px;font-size:5.4px;color:#2e74b5;transform:scaleX(1.1000);font-weight:bold">2</span>
<span class="t" style="left:243.00px;top:78.70px;font-size:14.5px;color:#444;transform:scaleX(0.9900);">A</span>
<span class="t" style="left:266.30px;top:79.70px;font-size:11px;color:#444;transform:scaleX(0.8875);">A</span>
<span class="t" style="left:293.70px;top:78.00px;font-size:13px;color:#444;transform:scaleX(0.9125);">Aa</span>
<span class="t" style="left:323.80px;top:108.60px;font-size:13.5px;color:#444;transform:scaleX(1.0222);-webkit-text-stroke:0.3px #444">A</span>
<span class="t" style="left:286.20px;top:104.60px;font-size:8.4px;color:#444;transform:scaleX(1.0400);font-weight:bold">ab</span>
<span class="t" style="left:596.60px;top:85.20px;font-size:13px;color:#000;transform:scaleX(0.9361);-webkit-text-stroke:0.25px #000">АаБбВвГг,</span>
<span class="t" style="left:594.70px;top:109.00px;font-size:12px;color:#444;transform:scaleX(1.0177);">¶ Обычный</span>
<span class="t" style="left:668.90px;top:85.20px;font-size:13px;color:#000;transform:scaleX(0.9148);-webkit-text-stroke:0.25px #000">АаБбВвГг,</span>
<span class="t" style="left:666.40px;top:109.00px;font-size:12px;color:#444;transform:scaleX(0.9221);">¶ Без инте...</span>
<div style="position:absolute;left:738px;top:85.00px;width:61.5px;height:20px;overflow:hidden"><span class="t" style="left:3.10px;top:0.00px;font-size:17px;color:#4a92d6;transform:scaleX(1.0145);">АаБбВв</span></div>
<span class="t" style="left:739.30px;top:109.00px;font-size:12px;color:#444;transform:scaleX(0.9983);">Заголово...</span>
<span class="t" style="left:856.02px;top:70.90px;font-size:12px;color:#444;transform:scaleX(0.9758);">Найти</span>
<span class="t" style="left:856.10px;top:94.00px;font-size:12px;color:#444;transform:scaleX(0.9759);">Заменить</span>
<span class="t" style="left:855.63px;top:116.40px;font-size:12px;color:#444;transform:scaleX(0.9667);">Выделить</span>
<span class="t" style="left:569.73px;top:135.00px;font-size:11.8px;color:#444;transform:scaleX(1.0242);">Ни<u>ж</u>няя граница</span>
<span class="t" style="left:569.76px;top:159.00px;font-size:11.8px;color:#444;transform:scaleX(0.9908);"><u>В</u>ерхняя граница</span>
<span class="t" style="left:570.75px;top:182.80px;font-size:11.8px;color:#444;transform:scaleX(0.9747);"><u>Л</u>евая граница</span>
<span class="t" style="left:569.75px;top:207.10px;font-size:11.8px;color:#444;transform:scaleX(0.9994);">Права<u>я</u> граница</span>
<span class="t" style="left:569.72px;top:231.50px;font-size:11.8px;color:#444;transform:scaleX(1.0331);">Нет гр<u>а</u>ницы</span>
<span class="t" style="left:569.73px;top:256.10px;font-size:11.8px;color:#444;transform:scaleX(1.0213);">В<u>с</u>е границы</span>
<span class="t" style="left:569.72px;top:279.90px;font-size:11.8px;color:#444;transform:scaleX(1.0311);">Вне<u>ш</u>ние границы</span>
<span class="t" style="left:569.73px;top:303.80px;font-size:11.8px;color:#444;transform:scaleX(1.0181);">Внутренние границ<u>ы</u></span>
<span class="t" style="left:569.75px;top:328.80px;font-size:11.8px;color:#444;transform:scaleX(1.0042);">Вну<u>т</u>ренняя горизонтальная граница</span>
<span class="t" style="left:569.75px;top:352.80px;font-size:11.8px;color:#444;transform:scaleX(0.9961);">Внутренняя вертикальная грани<u>ц</u>а</span>
<span class="t" style="left:570.75px;top:376.80px;font-size:11.8px;color:#444;transform:scaleX(0.9961);">Диагональная г<u>р</u>аница сверху вниз</span>
<span class="t" style="left:570.75px;top:400.70px;font-size:11.8px;color:#444;transform:scaleX(1.0013);">Диагонал<u>ь</u>ная граница снизу вверх</span>
<span class="t" style="left:568.59px;top:426.70px;font-size:11.8px;color:#444;transform:scaleX(1.0146);">Гори<u>з</u>онтальная линия</span>
<span class="t" style="left:568.59px;top:452.80px;font-size:11.8px;color:#444;transform:scaleX(1.0117);"><u>Н</u>арисовать таблицу</span>
<span class="t" style="left:569.60px;top:476.80px;font-size:11.8px;color:#262626;transform:scaleX(0.9948);"><u>О</u>тобразить сетку</span>
<span class="t" style="left:568.59px;top:500.30px;font-size:11.8px;color:#444;transform:scaleX(1.0098);">Границы <u>и</u> заливка...</span>
<span class="t" style="left:10.70px;top:501.70px;font-size:10.8px;color:#444;transform:scaleX(1.0358);">Страница 1 из 2</span>
<span class="t" style="left:113.76px;top:501.70px;font-size:10.8px;color:#444;transform:scaleX(1.0382);">Число слов: 6</span>
<span class="t" style="left:237.00px;top:501.70px;font-size:10.8px;color:#444;transform:scaleX(1.0505);">английский (США)</span>
<span class="t" style="left:909.96px;top:501.70px;font-size:10.8px;color:#444;transform:scaleX(1.0414);">110 %</span>
<span class="t" style="left:166.39px;top:289.80px;font-size:17.6px;color:#000;transform:scaleX(1.0110);">Фамилия</span>
<span class="t" style="left:167.40px;top:310.20px;font-size:17.6px;color:#000;transform:scaleX(1.0101);">Должность</span>
<span class="t" style="left:395.98px;top:289.80px;font-size:17.6px;color:#000;transform:scaleX(1.0188);">Имя</span>
<span class="t" style="left:396.00px;top:310.20px;font-size:17.6px;color:#000;transform:scaleX(1.0103);">Дата</span>
<svg style="left:0;top:0" width="961" height="526" viewBox="0 0 961 526">
<line x1="455.6" y1="198.4" x2="514" y2="141" stroke="#e0382d" stroke-width="3.6" stroke-linecap="round"/>
<path d="M529.8 125.5L500.5 134L513 138.8L519.5 153.5Z" fill="#e0382d"/>
<line x1="401" y1="489.2" x2="506" y2="487.6" stroke="#e0382d" stroke-width="3.6" stroke-linecap="round"/>
<path d="M528.7 486.9L501.3 473.9L506.8 487.3L501.3 500.8Z" fill="#e0382d"/>
</svg>

</body></html>
